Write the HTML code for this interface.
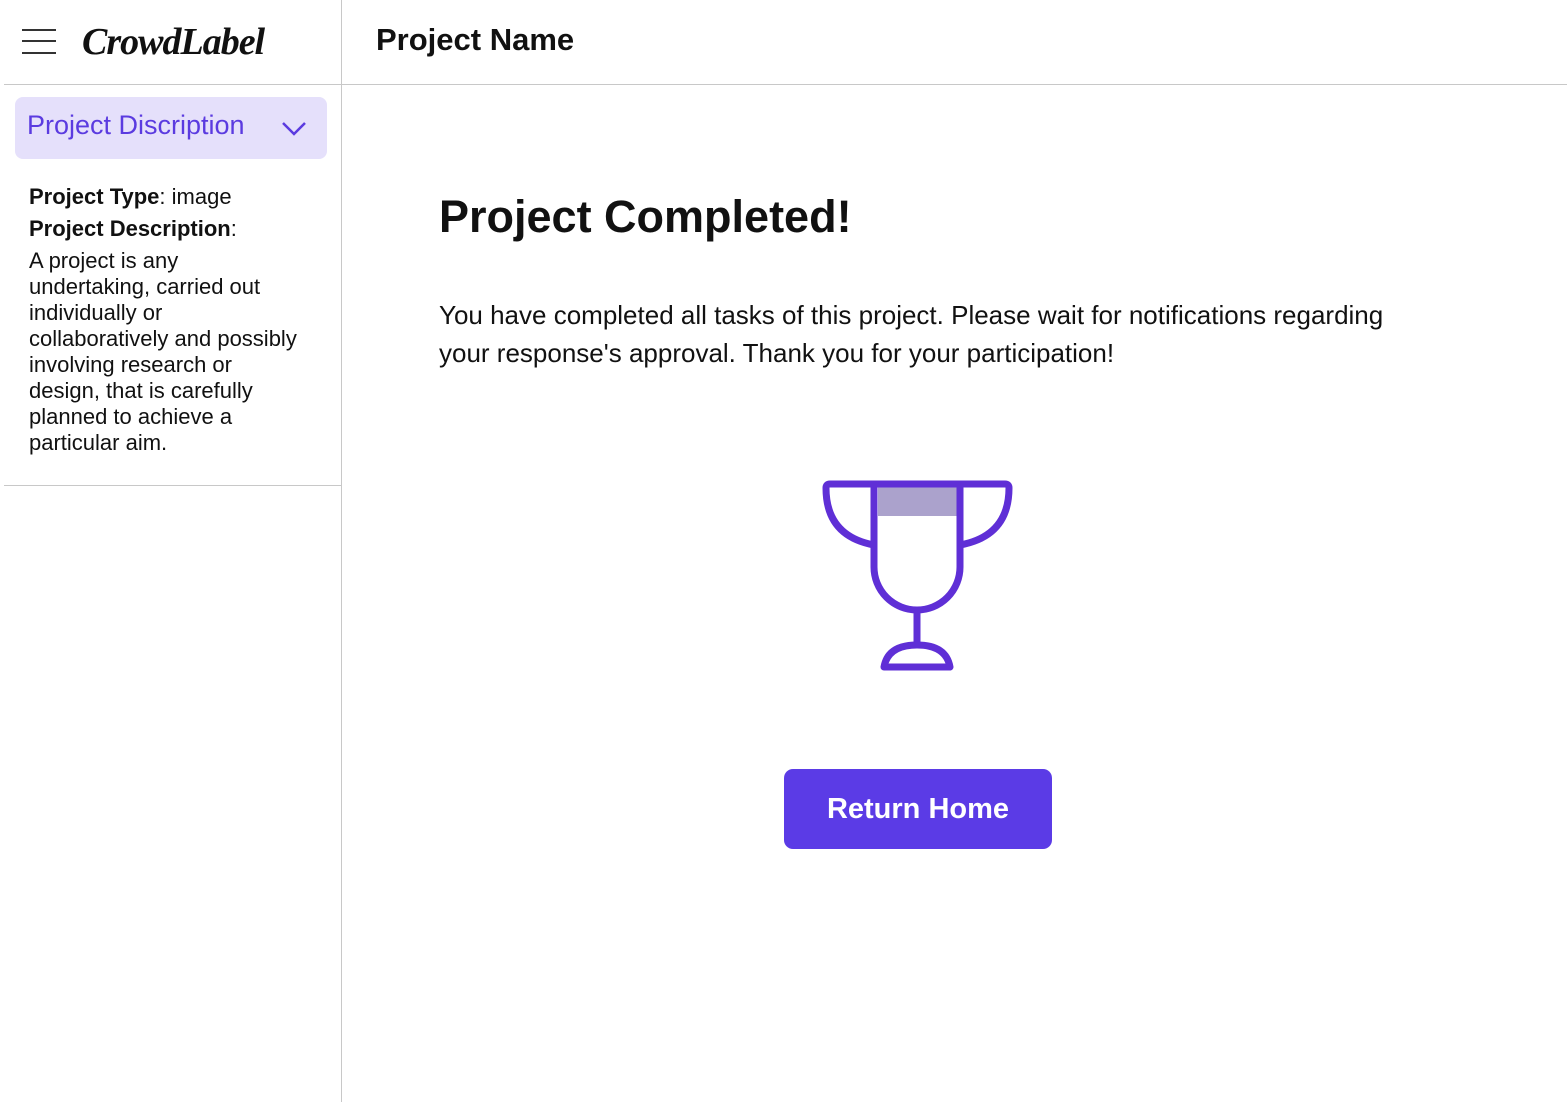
<!DOCTYPE html>
<html><head><meta charset="utf-8"><style>
*{margin:0;padding:0;box-sizing:border-box}
body{width:1567px;height:1102px;background:#fff;font-family:"Liberation Sans","DejaVu Sans",sans-serif;color:#111;position:relative;overflow:hidden}
.vline{position:absolute;left:341px;top:0;width:1px;height:1102px;background:#c8c8c8}
.hline{position:absolute;left:4px;top:84px;width:1563px;height:1px;background:#c8c8c8}
.sline{position:absolute;left:4px;top:485px;width:337px;height:1px;background:#c8c8c8}
.burger{position:absolute;left:22px;width:34px;height:2px;background:#333}
.logo{position:absolute;left:82px;top:20px;font-family:"Liberation Serif",serif;font-style:italic;font-weight:bold;font-size:38px;letter-spacing:-1px;color:#111}
.pname{position:absolute;left:376px;top:22px;font-size:31px;font-weight:bold;color:#111}
.pd{position:absolute;left:15px;top:97px;width:312px;height:62px;background:#e5e0fb;border-radius:8px;color:#5b3be0;font-size:27px;padding:13px 0 0 12px}
.side{position:absolute;left:29px;top:184px;width:310px;font-size:22px;line-height:26px;color:#111;white-space:nowrap}
h1{position:absolute;left:439px;top:191px;font-size:45px;font-weight:bold}
.msg{position:absolute;left:439px;top:296px;width:1100px;font-size:26px;line-height:38px;color:#111;white-space:nowrap}
.btn{position:absolute;left:784px;top:769px;width:268px;height:80px;background:#5b3be6;border-radius:9px;color:#fff;font-weight:bold;font-size:29px;text-align:center;line-height:80px}
</style></head><body>
<div class="vline"></div><div class="hline"></div><div class="sline"></div>
<div class="burger" style="top:29px"></div><div class="burger" style="top:40px"></div><div class="burger" style="top:52px"></div>
<div class="logo">CrowdLabel</div>
<div class="pname">Project Name</div>
<div class="pd">Project Discription
<svg style="position:absolute;left:266px;top:24px" width="26" height="16" viewBox="0 0 26 16"><path d="M2 2 L13 13 L24 2" fill="none" stroke="#5b3be0" stroke-width="2.5"/></svg></div>
<div class="side"><b>Project Type</b>: image<br><div style="margin-top:6px"><b>Project Description</b>:</div><div style="margin-top:6px">A project is any<br>undertaking, carried out<br>individually or<br>collaboratively and possibly<br>involving research or<br>design, that is carefully<br>planned to achieve a<br>particular aim.</div></div>
<h1>Project Completed!</h1>
<div class="msg">You have completed all tasks of this project. Please wait for notifications regarding<br>your response's approval. Thank you for your participation!</div>
<svg style="position:absolute;left:0;top:0" width="1567" height="1102">
<rect x="878" y="487" width="80" height="29" fill="#aba2cc"/>
<g fill="none" stroke="#5f2fd6" stroke-width="7" stroke-linejoin="round">
<path d="M830 484 H1005 Q1009 484 1009 488 Q1009 536 960 545"/>
<path d="M830 484 Q826 484 826 488 Q826 536 874 545"/>
<path d="M874 484 V567 A43 43 0 0 0 960 567 V484"/>
<path d="M917 610 V645"/>
<path d="M884 667 Q888 645 917 645 Q946 645 950 667 Z"/>
</g></svg>
<div class="btn">Return Home</div>
</body></html>
